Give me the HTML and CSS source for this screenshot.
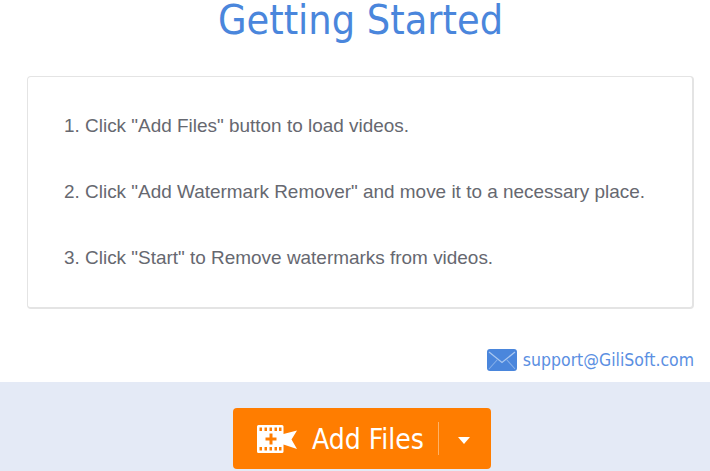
FILE: index.html
```html
<!DOCTYPE html>
<html lang="en">
<head>
<meta charset="utf-8">
<title>Getting Started</title>
<link rel="stylesheet" href="styles.css">
</head>
<body>
<main class="page">
  <h1 class="title">Getting Started</h1>
  <section class="card">
    <p class="step">1. Click "Add Files" button to load videos.</p>
    <p class="step">2. Click "Add Watermark Remover" and move it to a necessary place.</p>
    <p class="step">3. Click "Start" to Remove watermarks from videos.</p>
  </section>
  <div class="support">
    <svg class="mail" width="30" height="22" viewBox="0 0 30 22" aria-hidden="true">
      <rect width="30" height="22" rx="3" fill="#4a86dc"/>
      <path d="M2 3 L15 13.5 L28 3" fill="none" stroke="#a9c7f0" stroke-width="1.3"/>
      <path d="M2 20 L10.5 10.5 M28 20 L19.5 10.5" fill="none" stroke="#86afe8" stroke-width="1.1"/>
    </svg>
    <span class="email">support@GiliSoft.com</span>
  </div>
</main>
<footer class="bar">
  <button class="add" type="button">
    <svg class="film" width="40" height="28" viewBox="0 0 40 28" aria-hidden="true">
      <path fill="#fff" fill-rule="evenodd" d="M0 1.5 Q0 0 1.5 0 H25 Q26.5 0 26.5 1.5 V9 L40 5.5 L34.5 14.5 L40 24 L26.5 19.5 V26.5 Q26.5 28 25 28 H1.5 Q0 28 0 26.5 Z M2.5 2.5 V6 H5 V2.5 Z M7.5 2.5 V6 H10 V2.5 Z M12.5 2.5 V6 H15 V2.5 Z M17.5 2.5 V6 H20 V2.5 Z M22 2.5 V6 H24.5 V2.5 Z M2.5 22 V25.5 H5 V22 Z M7.5 22 V25.5 H10 V22 Z M12.5 22 V25.5 H15 V22 Z M17.5 22 V25.5 H20 V22 Z M22 22 V25.5 H24.5 V22 Z M12.5 8.5 V12.5 H8.5 V15.5 H12.5 V19.5 H15.5 V15.5 H19.5 V12.5 H15.5 V8.5 Z"/>
    </svg>
    <span class="add-label">Add Files</span>
    <span class="sep"></span>
    <span class="caret"></span>
  </button>
</footer>
</body>
</html>
```
FILE: styles.css
```css
* { box-sizing: border-box; }
html, body { margin: 0; height: 471px; overflow: hidden; background: #fff; }
body { display: flex; flex-direction: column; font-family: "Liberation Sans", Arial, sans-serif; }
.page { height: 382px; padding: 0 16px 0 27px; display: flex; flex-direction: column; }
.title {
  margin: 0;
  height: 76px;
  text-align: center;
  font-family: "DejaVu Sans Condensed", "DejaVu Sans", sans-serif;
  font-weight: 400;
  font-size: 41px;
  line-height: 41px;
  color: #4a86dc;
}
.card {
  width: 667px;
  height: 233px;
  border: 1px solid #e4e4e4;
  border-bottom-width: 2px;
  border-right-width: 2px;
  border-radius: 4px;
  padding: 38px 0 0 36px;
  display: flex;
  flex-direction: column;
  gap: 44px;
}
.step { margin: 0; font-size: 18.95px; line-height: 22px; color: #666870; }
.support {
  margin-top: 40px;
  display: flex;
  justify-content: flex-end;
  align-items: center;
  gap: 6px;
}
.email { font-family: "DejaVu Sans Condensed", "DejaVu Sans", sans-serif; font-size: 17.5px; line-height: 22px; color: #5b8fe2; }
.bar {
  height: 89px;
  background: #e4eaf6;
  display: flex;
  justify-content: center;
  padding: 26px 0 0 14px;
}
.add {
  width: 258px;
  height: 61px;
  border: 0;
  border-radius: 4px;
  background: #ff7d00;
  color: #fff;
  display: flex;
  align-items: center;
  padding: 0 0 0 24px;
}
.add-label { margin: 3px 0 0 15px; font-family: "DejaVu Sans Condensed", "DejaVu Sans", sans-serif; font-size: 28px; line-height: 32px; }
.sep { margin-left: 14px; width: 1px; height: 33px; background: #ffb266; }
.caret {
  margin: 4px 0 0 19px;
  width: 0;
  height: 0;
  border-left: 6.5px solid transparent;
  border-right: 6.5px solid transparent;
  border-top: 7px solid #fff;
}
```
